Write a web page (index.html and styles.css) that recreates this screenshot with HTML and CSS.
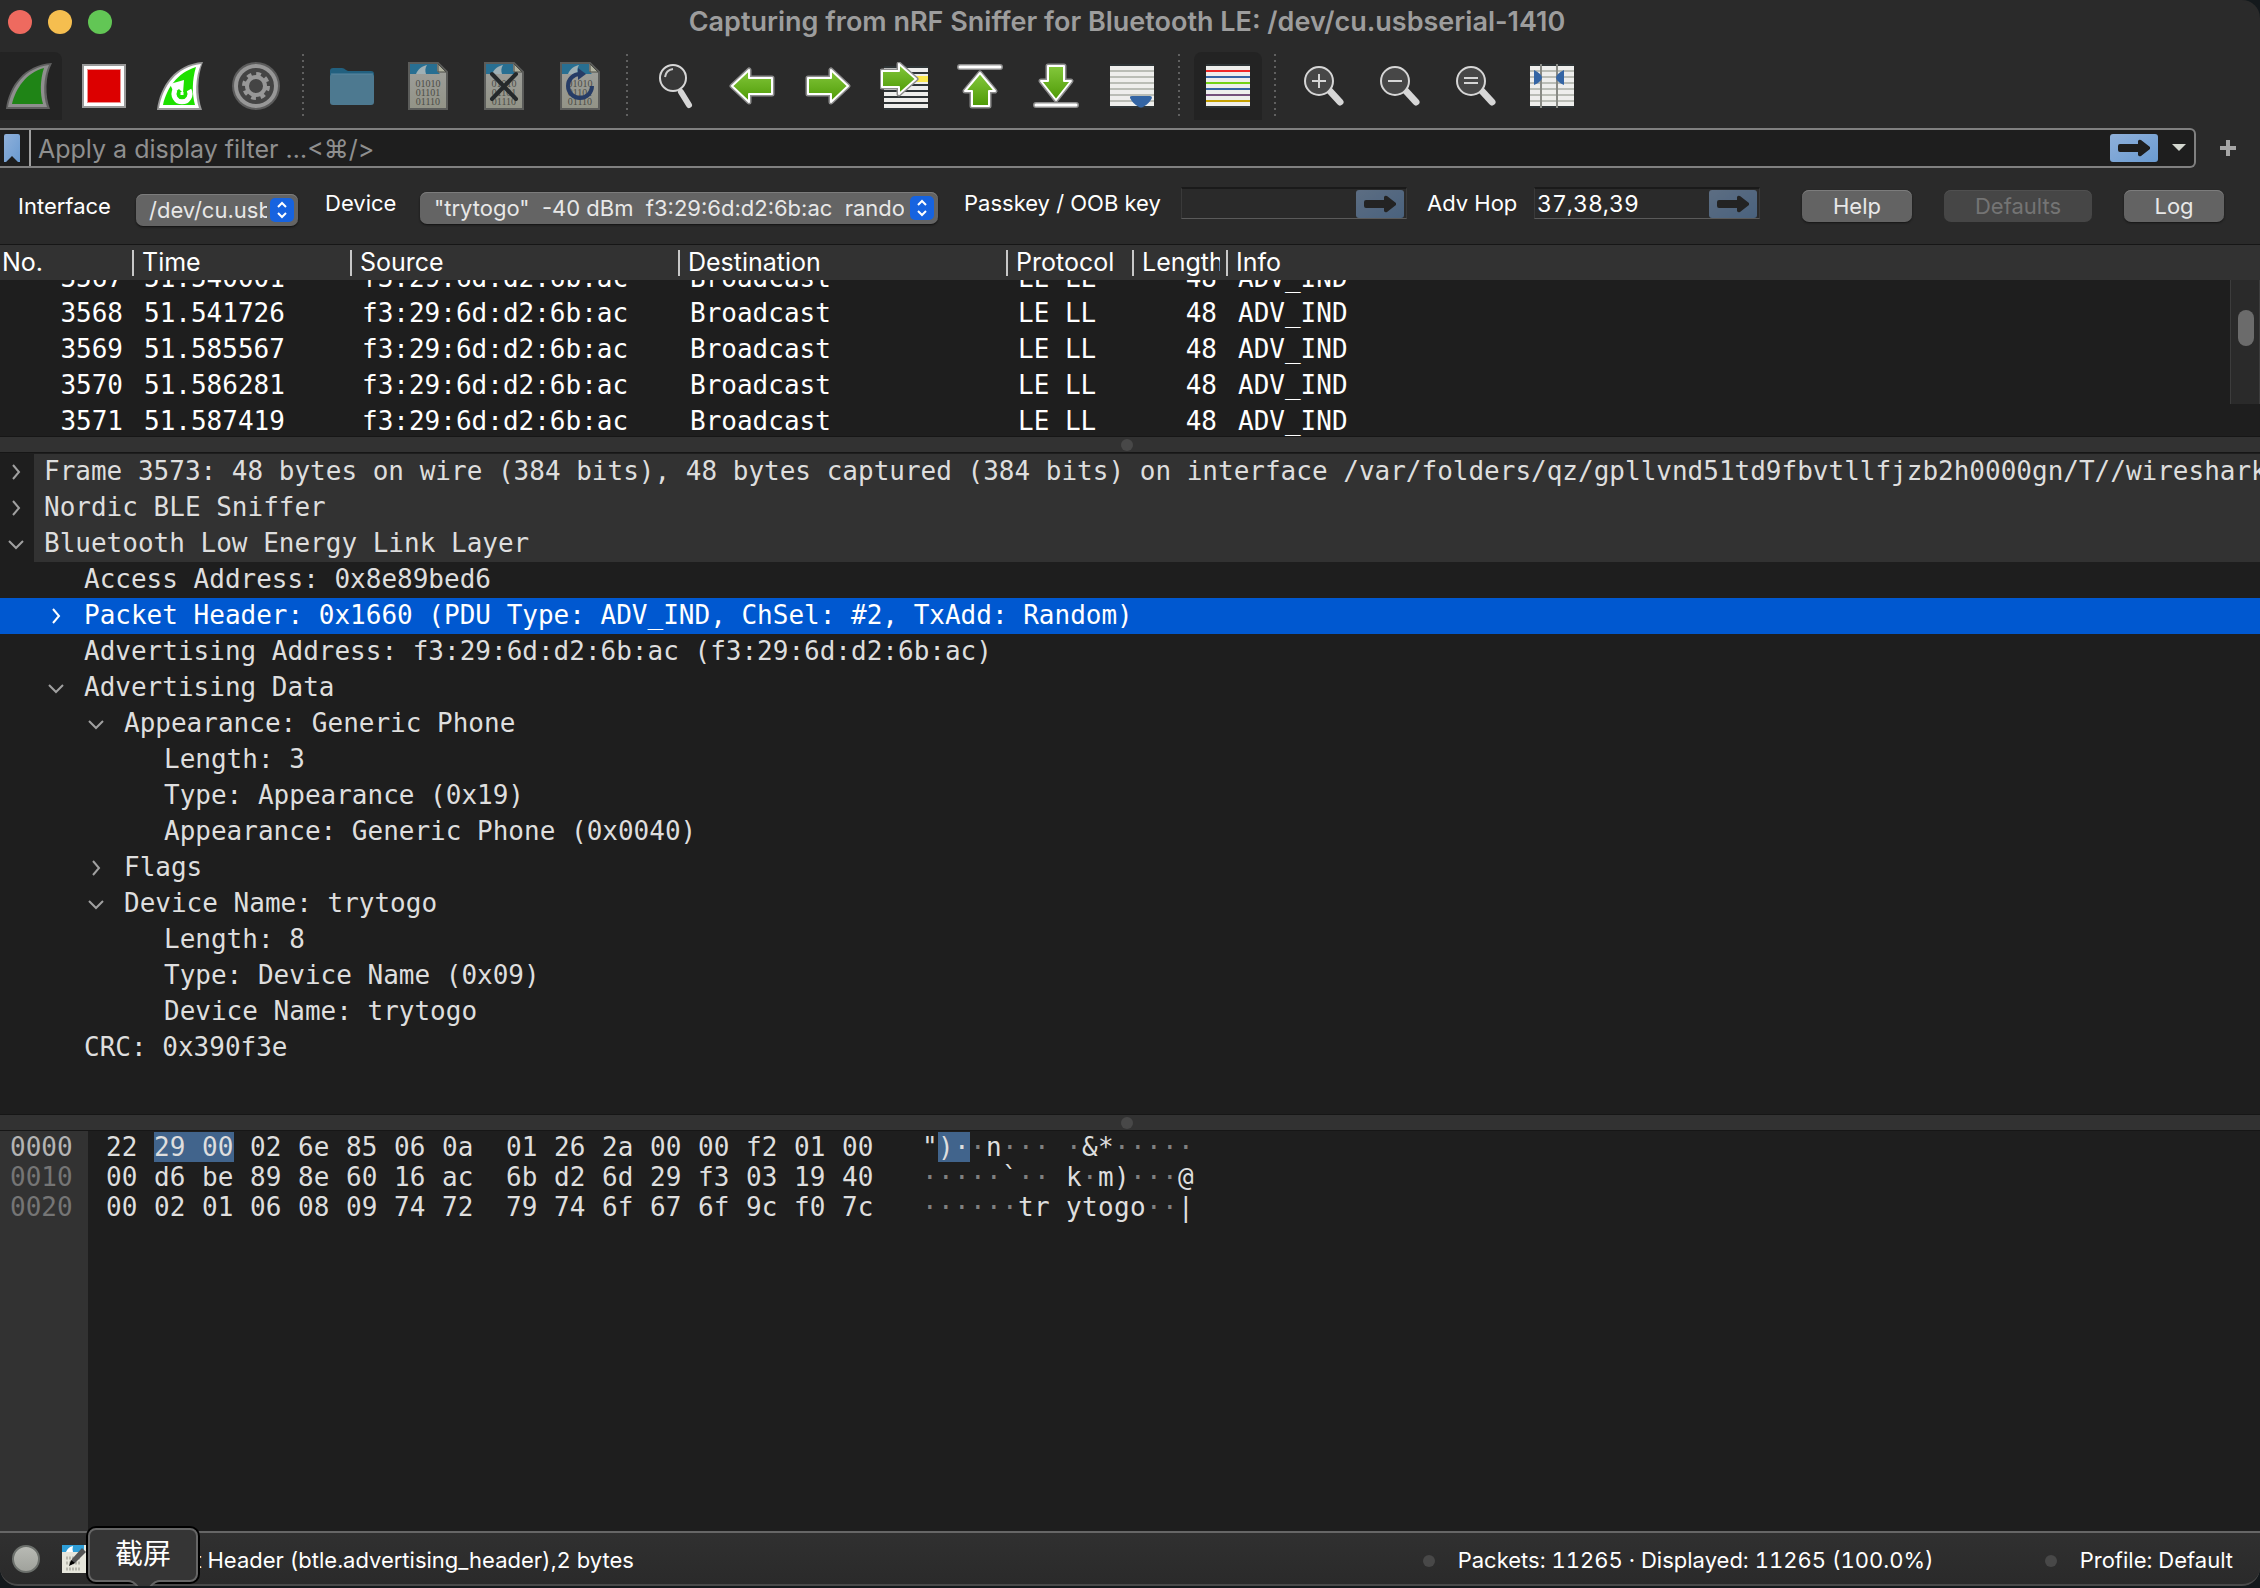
FILE: index.html
```html
<!DOCTYPE html>
<html lang="en">
<head>
<meta charset="utf-8">
<title>Capturing from nRF Sniffer for Bluetooth LE: /dev/cu.usbserial-1410</title>
<link rel="stylesheet" href="styles.css">
</head>
<body>
<svg class="defs" aria-hidden="true">
  <defs>
    <linearGradient id="gGreen" x1="0" y1="0" x2="0" y2="1"><stop offset="0" stop-color="#84c83c"/><stop offset="1" stop-color="#4e9a06"/></linearGradient>
    <linearGradient id="gBlue" x1="0" y1="0" x2="1" y2="1"><stop offset="0" stop-color="#8fb0da"/><stop offset="1" stop-color="#6a9bd1"/></linearGradient>
    <linearGradient id="gPaper" x1="0" y1="0" x2="0" y2="1"><stop offset="0" stop-color="#9fa09d"/><stop offset="1" stop-color="#929386"/></linearGradient>
    <symbol id="doc" viewBox="0 0 48 48">
      <path d="M5 1H34L43 10V47H5Z" fill="url(#gPaper)" stroke="#5b5c5a" stroke-width="2"/>
      <path d="M6 2H33V9L36 12H6Z" fill="#286f92"/>
      <path d="M12 12C14 7 18 4 23 3C21 6 21 9 22 12Z" fill="#9fb0b5"/>
      <path d="M34 2V10H42Z" fill="#b0b19f" stroke="#4b4c46" stroke-width="1"/>
      <g font-family="Liberation Serif, serif" font-size="10" fill="#4c4d47" text-anchor="middle"><text x="24" y="25">01010</text><text x="24" y="34">01101</text><text x="24" y="43">01110</text></g>
    </symbol>
    <symbol id="sheet" viewBox="0 0 48 48">
      <path d="M2 2H46V46H2Z" fill="#2e3436"/><path d="M2 4H46V44H2Z" fill="#eeeeec"/>
      <path d="M2 9H46M2 15H46M2 21H46M2 27H46M2 33H46M2 39H46" stroke="#babdb6" stroke-width="2"/>
    </symbol>
    <symbol id="lens" viewBox="0 0 48 48">
      <path d="M29 28L40 40" stroke="#d6d6d6" stroke-width="7" stroke-linecap="round"/>
      <circle cx="19" cy="19" r="14" fill="#474747" stroke="#d6d6d6" stroke-width="2"/>
    </symbol>
    <symbol id="go" viewBox="0 0 48 28">
      <rect width="48" height="28" rx="3" fill="url(#gBlue)"/>
      <path d="M10 10H28V7Q29 5 31 6L40 13V15L31 22Q29 23 28 21V18H10Q8 18 8 16V12Q8 10 10 10Z" fill="#1e1e1e"/>
    </symbol>
    <symbol id="right" viewBox="0 0 16 16"><path d="M5 1L11 8L5 15" fill="none" stroke="currentColor" stroke-width="2"/></symbol>
    <symbol id="down" viewBox="0 0 16 16"><path d="M1 5L8 12L15 5" fill="none" stroke="currentColor" stroke-width="2"/></symbol>
  </defs>
</svg>

<div class="window">
  <header class="titlebar">
    <div class="lights"><i class="red"></i><i class="yellow"></i><i class="green"></i></div>
    <h1>Capturing from nRF Sniffer for Bluetooth LE: /dev/cu.usbserial-1410</h1>
  </header>

  <nav class="toolbar">
    <button class="on" aria-label="Start capture"><svg viewBox="0 0 48 48"><path d="M2 47C5 24 20 3 48 1C41 14 41 34 46 47Z" fill="#606060"/><path d="M4 45C8 24 21 6 45 3C39 16 39 34 43 45Z" fill="#8f8f8f"/><path d="M8 42C12 26 22 11 40 6C36 18 36 32 39 42Z" fill="#1f8416"/></svg></button>
    <button aria-label="Stop capture"><svg viewBox="0 0 48 48"><path d="M2 2H46V46H2Z" fill="#999"/><path d="M4 4H44V44H4Z" fill="#fff"/><path d="M7 7H41V41H7Z" fill="#ef9090"/><path d="M8 8H40V40H8Z" fill="#dc0000"/></svg></button>
    <button aria-label="Restart capture"><svg viewBox="0 0 48 48"><path d="M1 48C4 24 19 2 47 0C41 14 41 34 46 48Z" fill="#999"/><path d="M3 46C7 24 20 5 45 2C39 16 39 34 43 46Z" fill="#fff"/><path d="M7 43C11 26 21 11 40 5C36 18 36 32 39 43Z" fill="#1ee000"/><path d="M19 28A8 8 0 1 0 33 28" fill="none" stroke="#fff" stroke-width="5"/><path d="M14 22L28 18L27 31L23 27L18 31Z" fill="#fff"/><path d="M26 30V33" stroke="#fff" stroke-width="3"/></svg></button>
    <button aria-label="Capture options"><svg viewBox="0 0 48 48"><circle cx="24" cy="24" r="24" fill="#5c5c5c"/><circle cx="24" cy="24" r="22" fill="#979797"/><circle cx="24" cy="24" r="18" fill="#444"/><circle cx="24" cy="24" r="12" fill="none" stroke="#979797" stroke-width="4" stroke-dasharray="4.7 4.7"/><circle cx="24" cy="24" r="9" fill="none" stroke="#979797" stroke-width="4"/></svg></button>
    <span class="sep"></span>
    <button aria-label="Open file"><svg viewBox="0 0 48 48"><path d="M2 9Q2 6 5 6H14Q16 6 18 8L20 9H43Q46 9 46 12V20H2Z" fill="#22607f"/><rect x="2" y="12" width="44" height="31" rx="3" fill="#4d7990"/><path d="M3 12H45" stroke="#5a87a0"/></svg></button>
    <button aria-label="Save file"><svg><use href="#doc"/></svg></button>
    <button aria-label="Close file"><svg viewBox="0 0 48 48"><use href="#doc"/><path d="M12 12L36 37M36 12L12 37" stroke="#25292b" stroke-width="4" stroke-linecap="round"/></svg></button>
    <button aria-label="Reload file"><svg viewBox="0 0 48 48"><use href="#doc"/><path d="M36 24A12 12 0 1 1 24 12" fill="none" stroke="#263c66" stroke-width="4"/><path d="M22 6L30 12L22 18Z" fill="#263c66"/></svg></button>
    <span class="sep"></span>
    <button aria-label="Find packet"><svg viewBox="0 0 48 48"><path d="M29 30L37 43" stroke="#d6d6d6" stroke-width="6" stroke-linecap="round"/><circle cx="21" cy="16" r="13" fill="#383838" stroke="#d6d6d6" stroke-width="2"/><path d="M13 15Q14 8 21 7" fill="none" stroke="#ccc" stroke-width="2"/></svg></button>
    <button aria-label="Previous packet"><svg viewBox="0 0 48 48"><path d="M4 24L21 8V16H44V32H21V40Z" fill="url(#gGreen)" stroke="#8c8c8c" stroke-width="5" stroke-linejoin="round"/><path d="M4 24L21 8V16H44V32H21V40Z" fill="url(#gGreen)" stroke="#fff" stroke-width="2" stroke-linejoin="round"/></svg></button>
    <button aria-label="Next packet"><svg viewBox="0 0 48 48"><path d="M44 24L27 8V16H4V32H27V40Z" fill="url(#gGreen)" stroke="#8c8c8c" stroke-width="5" stroke-linejoin="round"/><path d="M44 24L27 8V16H4V32H27V40Z" fill="url(#gGreen)" stroke="#fff" stroke-width="2" stroke-linejoin="round"/></svg></button>
    <button aria-label="Go to packet"><svg viewBox="0 0 48 48"><path d="M4 4H48V48H4Z" fill="#2e3436"/><path d="M4 8H48M4 14H48M4 20H48M4 26H48M4 32H48M4 38H48M4 44H48" stroke="#eeeeec" stroke-width="4"/><path d="M34 14H48V20H34Z" fill="#fce94f"/><path d="M36 17L19 2V9H2V25H19V32Z" fill="url(#gGreen)" stroke="#8c8c8c" stroke-width="5" stroke-linejoin="round"/><path d="M36 17L19 2V9H2V25H19V32Z" fill="url(#gGreen)" stroke="#fff" stroke-width="2" stroke-linejoin="round"/></svg></button>
    <button aria-label="First packet"><svg viewBox="0 0 48 48"><path d="M4 5H44" stroke="#8c8c8c" stroke-width="6" stroke-linecap="round"/><path d="M4 5H44" stroke="#fff" stroke-width="3" stroke-linecap="round"/><path d="M24 11L39 29H33V44H16V29H9Z" fill="url(#gGreen)" stroke="#8c8c8c" stroke-width="5" stroke-linejoin="round"/><path d="M24 11L39 29H33V44H16V29H9Z" fill="url(#gGreen)" stroke="#fff" stroke-width="2" stroke-linejoin="round"/></svg></button>
    <button aria-label="Last packet"><svg viewBox="0 0 48 48"><path d="M4 43H44" stroke="#8c8c8c" stroke-width="6" stroke-linecap="round"/><path d="M4 43H44" stroke="#fff" stroke-width="3" stroke-linecap="round"/><path d="M24 38L39 19H32V4H16V19H9Z" fill="url(#gGreen)" stroke="#8c8c8c" stroke-width="5" stroke-linejoin="round"/><path d="M24 38L39 19H32V4H16V19H9Z" fill="url(#gGreen)" stroke="#fff" stroke-width="2" stroke-linejoin="round"/></svg></button>
    <button aria-label="Auto scroll"><svg viewBox="0 0 48 48"><use href="#sheet"/><path d="M22 35Q22 34 24 34H42Q44 34 44 36Q41 42 35 45Q33 46 31 45Q25 42 22 36Z" fill="#3465a4"/></svg></button>
    <span class="sep"></span>
    <button class="on" aria-label="Colorize packets"><svg viewBox="0 0 48 48"><path d="M2 2H46V46H2Z" fill="#2e3436"/><path d="M2 4H46V44H2Z" fill="#eeeeec"/><g stroke-width="2"><path d="M2 9H46" stroke="#ef2929"/><path d="M2 15H46M2 27H46" stroke="#3465a4"/><path d="M2 21H46" stroke="#73d216"/><path d="M2 33H46" stroke="#75507b"/><path d="M2 39H46" stroke="#c4a000"/></g></svg></button>
    <span class="sep"></span>
    <button aria-label="Zoom in"><svg viewBox="0 0 48 48"><use href="#lens"/><path d="M12 19H26M19 12V26" stroke="#d6d6d6" stroke-width="2"/></svg></button>
    <button aria-label="Zoom out"><svg viewBox="0 0 48 48"><use href="#lens"/><path d="M12 19H26" stroke="#d6d6d6" stroke-width="2"/></svg></button>
    <button aria-label="Normal size"><svg viewBox="0 0 48 48"><use href="#lens"/><path d="M12 16H26M12 21H26" stroke="#d6d6d6" stroke-width="2"/></svg></button>
    <button aria-label="Resize columns"><svg viewBox="0 0 48 48"><use href="#sheet"/><path d="M13 2V46M29 2V46" stroke="#888a85" stroke-width="2"/><path d="M6 8Q14 12 14 16Q13 20 6 23ZM36 8Q28 12 28 16Q29 20 36 23Z" fill="#3465a4"/></svg></button>
  </nav>

  <div class="filter-row">
    <div class="filter">
      <button class="bookmark" aria-label="Filter bookmarks"><svg viewBox="0 0 16 28"><path d="M2 0H14Q16 0 16 2V28H14L8 22L2 28H0V2Q0 0 2 0Z" fill="url(#gBlue)"/></svg></button>
      <input type="text" aria-label="Display filter" placeholder="Apply a display filter …&lt;⌘/&gt;">
      <button class="go" aria-label="Apply filter"><svg><use href="#go"/></svg></button>
      <button class="recent" aria-label="Recent filters"><svg viewBox="0 0 14 8"><path d="M0 0H14L7 7Z" fill="#d3d7cf"/></svg></button>
    </div>
    <button class="plus" aria-label="Add filter button"><svg viewBox="0 0 16 16"><path d="M8 0V16M0 8H16" stroke="#a6a6a6" stroke-width="4"/></svg></button>
  </div>

  <div class="device-bar">
    <label for="iface" class="l-iface">Interface</label>
    <div class="picker p-iface"><select id="iface"><option>/dev/cu.usbserial-1410</option></select><svg viewBox="0 0 24 24"><rect width="24" height="24" rx="5" fill="#1663e0"/><path d="M8 9L12 5L16 9M8 15L12 19L16 15" fill="none" stroke="#fff" stroke-width="2"/></svg></div>
    <label for="device" class="l-device">Device</label>
    <div class="picker p-device"><select id="device"><option>"trytogo"&nbsp; -40 dBm&nbsp; f3:29:6d:d2:6b:ac&nbsp; random</option></select><svg viewBox="0 0 24 24"><rect width="24" height="24" rx="5" fill="#1663e0"/><path d="M8 9L12 5L16 9M8 15L12 19L16 15" fill="none" stroke="#fff" stroke-width="2"/></svg></div>
    <label for="key" class="l-key">Passkey / OOB key</label>
    <div class="entry"><input id="key" type="text"><button class="go dim" aria-label="Send key"><svg><use href="#go"/></svg></button></div>
    <label for="hop" class="l-hop">Adv Hop</label>
    <div class="entry"><input id="hop" type="text" value="37,38,39"><button class="go dim" aria-label="Set hop"><svg><use href="#go"/></svg></button></div>
    <div class="actions"><button class="help">Help</button><button class="defaults" disabled>Defaults</button><button class="log">Log</button></div>
  </div>

  <section class="packets">
    <table>
      <colgroup><col class="c-no"><col class="c-time"><col class="c-addr"><col class="c-addr"><col class="c-proto"><col class="c-len"><col></colgroup>
      <thead><tr><th>No.</th><th>Time</th><th>Source</th><th>Destination</th><th>Protocol</th><th><div>Length</div></th><th>Info</th></tr></thead>
      <tbody>
        <tr class="cut"><td><div>3567</div></td><td><div>51.540001</div></td><td><div>f3:29:6d:d2:6b:ac</div></td><td><div>Broadcast</div></td><td><div>LE LL</div></td><td><div>48</div></td><td><div>ADV_IND</div></td></tr>
        <tr><td>3568</td><td>51.541726</td><td>f3:29:6d:d2:6b:ac</td><td>Broadcast</td><td>LE LL</td><td>48</td><td>ADV_IND</td></tr>
        <tr><td>3569</td><td>51.585567</td><td>f3:29:6d:d2:6b:ac</td><td>Broadcast</td><td>LE LL</td><td>48</td><td>ADV_IND</td></tr>
        <tr><td>3570</td><td>51.586281</td><td>f3:29:6d:d2:6b:ac</td><td>Broadcast</td><td>LE LL</td><td>48</td><td>ADV_IND</td></tr>
        <tr><td>3571</td><td>51.587419</td><td>f3:29:6d:d2:6b:ac</td><td>Broadcast</td><td>LE LL</td><td>48</td><td>ADV_IND</td></tr>
      </tbody>
    </table>
    <div class="scroll"><i></i></div>
  </section>

  <div class="splitter"><i></i></div>

  <section class="tree">
    <div class="node top"><svg><use href="#right"/></svg><span>Frame 3573: 48 bytes on wire (384 bits), 48 bytes captured (384 bits) on interface /var/folders/qz/gpllvnd51td9fbvtllfjzb2h0000gn/T//wireshark_extcap</span></div>
    <div class="node top"><svg><use href="#right"/></svg><span>Nordic BLE Sniffer</span></div>
    <div class="node top"><svg><use href="#down"/></svg><span>Bluetooth Low Energy Link Layer</span></div>
    <div class="node d1"><span>Access Address: 0x8e89bed6</span></div>
    <div class="node d1 selected"><svg><use href="#right"/></svg><span>Packet Header: 0x1660 (PDU Type: ADV_IND, ChSel: #2, TxAdd: Random)</span></div>
    <div class="node d1"><span>Advertising Address: f3:29:6d:d2:6b:ac (f3:29:6d:d2:6b:ac)</span></div>
    <div class="node d1"><svg><use href="#down"/></svg><span>Advertising Data</span></div>
    <div class="node d2"><svg><use href="#down"/></svg><span>Appearance: Generic Phone</span></div>
    <div class="node d3"><span>Length: 3</span></div>
    <div class="node d3"><span>Type: Appearance (0x19)</span></div>
    <div class="node d3"><span>Appearance: Generic Phone (0x0040)</span></div>
    <div class="node d2"><svg><use href="#right"/></svg><span>Flags</span></div>
    <div class="node d2"><svg><use href="#down"/></svg><span>Device Name: trytogo</span></div>
    <div class="node d3"><span>Length: 8</span></div>
    <div class="node d3"><span>Type: Device Name (0x09)</span></div>
    <div class="node d3"><span>Device Name: trytogo</span></div>
    <div class="node d1"><span>CRC: 0x390f3e</span></div>
  </section>

  <div class="splitter"><i></i></div>

  <section class="hex">
    <table>
      <tbody>
        <tr><th class="cur">0000</th><td>22</td><td class="hl">29</td><td class="hl-end"><b>00</b></td><td>02</td><td>6e</td><td>85</td><td>06</td><td class="mid">0a</td><td>01</td><td>26</td><td>2a</td><td>00</td><td>00</td><td>f2</td><td>01</td><td class="end">00</td><td class="a">"</td><td class="a hl">)</td><td class="a hl">·</td><td class="a n">·</td><td class="a">n</td><td class="a n">·</td><td class="a n">·</td><td class="a n">·</td><td class="a"></td><td class="a n">·</td><td class="a">&amp;</td><td class="a">*</td><td class="a n">·</td><td class="a n">·</td><td class="a n">·</td><td class="a n">·</td><td class="a n">·</td></tr>
        <tr><th>0010</th><td>00</td><td>d6</td><td>be</td><td>89</td><td>8e</td><td>60</td><td>16</td><td class="mid">ac</td><td>6b</td><td>d2</td><td>6d</td><td>29</td><td>f3</td><td>03</td><td>19</td><td class="end">40</td><td class="a n">·</td><td class="a n">·</td><td class="a n">·</td><td class="a n">·</td><td class="a n">·</td><td class="a">`</td><td class="a n">·</td><td class="a n">·</td><td class="a"></td><td class="a">k</td><td class="a n">·</td><td class="a">m</td><td class="a">)</td><td class="a n">·</td><td class="a n">·</td><td class="a n">·</td><td class="a">@</td></tr>
        <tr><th>0020</th><td>00</td><td>02</td><td>01</td><td>06</td><td>08</td><td>09</td><td>74</td><td class="mid">72</td><td>79</td><td>74</td><td>6f</td><td>67</td><td>6f</td><td>9c</td><td>f0</td><td class="end">7c</td><td class="a n">·</td><td class="a n">·</td><td class="a n">·</td><td class="a n">·</td><td class="a n">·</td><td class="a n">·</td><td class="a">t</td><td class="a">r</td><td class="a"></td><td class="a">y</td><td class="a">t</td><td class="a">o</td><td class="a">g</td><td class="a">o</td><td class="a n">·</td><td class="a n">·</td><td class="a">|</td></tr>
      </tbody>
    </table>
  </section>

  <footer class="status">
    <button class="led" aria-label="Expert information"></button>
    <button class="note" aria-label="Capture file comment"><svg viewBox="0 0 24 28"><path d="M0 0H24V28H0Z" fill="#e6e6dc"/><path d="M0 0H22V7H0Z" fill="#2f9fd8"/><path d="M4 7Q6 2 11 1Q10 4 11 7Z" fill="#fff"/><path d="M4 13H18M4 18H18M4 24H18" stroke="#b8b8ae" stroke-width="3" stroke-dasharray="2 1"/><path d="M8 20L10 14L20 3L24 7L13 18Z" fill="#555"/><path d="M7 21L9 15L13 18Z" fill="#000"/></svg></button>
    <p class="field">Packet Header (btle.advertising_header),2 bytes</p>
    <i class="grip"></i><p class="counts">Packets: 11265 · Displayed: 11265 (100.0%)</p>
    <i class="grip"></i><p>Profile: Default</p>
    <div class="tip">截屏<svg viewBox="0 0 32 10"><path d="M0 0C8 1 10 8 12 10H20C22 8 24 1 32 0Z" fill="#353535"/><path d="M0 1C8 1 10 8 12 10M20 10C22 8 24 1 32 1" fill="none" stroke="#666" stroke-width="2"/></svg></div>
  </footer>
</div>
</body>
</html>
```
FILE: styles.css
```css
* { box-sizing: border-box; }
html { height: 100%; background: #14191c; }
body { margin: 0; height: 100%; color: #fff; font: 22px/28px Inter, "Liberation Sans", "Noto Sans CJK SC", sans-serif; }
button, input, select { font: inherit; color: inherit; margin: 0; padding: 0; border: 0; background: none; appearance: none; outline: 0; }
svg { display: block; }
p, h1 { margin: 0; }
.defs { position: absolute; width: 0; height: 0; }

.window { display: flex; flex-direction: column; height: calc(100% - 2px); overflow: hidden; background: #2a2a2a; border-radius: 0 18px 18px 18px; }

.titlebar { display: grid; grid-template-columns: 1fr auto 1fr; align-items: center; height: 44px; flex: none; padding: 0 14px 0 8px; }
.titlebar h1 { font-size: 27px; font-weight: 600; color: #9d9d9d; white-space: nowrap; }
.lights { display: flex; gap: 16px; }
.lights i { width: 24px; height: 24px; border-radius: 50%; }
.red { background: #ee6a5f; }
.yellow { background: #f5be4f; }
.green { background: #62c655; }

.toolbar { display: flex; gap: 8px; flex: none; margin: 8px 0 8px -6px; }
.toolbar button { width: 68px; height: 68px; display: grid; place-items: center; border-radius: 8px 8px 0 0; }
.toolbar .on { background: #232323; }
.toolbar svg { width: 48px; height: 48px; }
.sep { width: 12px; margin: 2px 0 4px; background: repeating-linear-gradient(#606060 0 2px, transparent 2px 6px) 4px 0 / 2px 100% no-repeat; }

.filter-row { display: flex; align-items: center; flex: none; }
.filter { flex: 1; display: flex; align-items: center; height: 40px; background: #1e1e1e; border: 2px solid #808080; border-left: 0; border-radius: 0 6px 6px 0; }
.bookmark { margin-left: 4px; width: 16px; }
.bookmark svg { width: 16px; height: 28px; }
.filter input { flex: 1; height: 36px; margin-left: 9px; padding: 2px 0 0 7px; border-left: 2px solid #a0a0a0; font-size: 25px; }
.filter input::placeholder { color: #8f8f8f; opacity: 1; }
.go svg { width: 48px; height: 28px; }
.recent { margin: 0 8px 0 14px; }
.recent svg { width: 14px; height: 8px; }
.plus { margin: 0 24px; }
.plus svg { width: 16px; height: 16px; }

.device-bar { display: flex; align-items: center; flex: none; height: 76px; padding: 0 36px 6px 18px; white-space: nowrap; }
.l-iface { width: 118px; margin-top: 6px; }
.l-device { width: 95px; }
.l-key { width: 217px; }
.l-hop { width: 107px; }
.picker { position: relative; height: 32px; border-radius: 7px; background: #646464; box-shadow: inset 0 1px #7c7c7c, 0 1px 2px #111; }
.picker select { width: 100%; height: 32px; padding: 0 34px 0 14px; color: #e8e8e8; overflow: hidden; text-overflow: clip; }
.picker svg { position: absolute; right: 4px; top: 4px; width: 24px; height: 24px; pointer-events: none; }
.p-iface { width: 162px; margin: 14px 27px 0 0; }
.p-iface select { padding: 0 31px 0 13px; }
.p-device { width: 518px; margin: 10px 26px 0 0; }
.entry { display: flex; align-items: center; width: 226px; height: 32px; margin-right: 20px; padding-right: 2px; border: 1px solid #3a3a3a; border-top: 2px solid #1a1a1a; border-bottom-color: #5a5a5a; }
.entry input { flex: 1; min-width: 0; padding-left: 2px; font-size: 23px; font-variant-numeric: tabular-nums; }
.dim { opacity: .5; }
.actions { display: flex; gap: 32px; margin: 6px 0 0 auto; }
.actions button { height: 32px; border-radius: 7px; background: #636363; box-shadow: inset 0 1px #7c7c7c, 0 1px 2px #151515; color: #e8e8e8; }
.actions button:disabled { background: #464646; box-shadow: inset 0 1px #505050; color: #747474; }
.help { width: 110px; }
.defaults { width: 148px; }
.log { width: 100px; }

.packets { position: relative; flex: none; height: 192px; overflow: hidden; background: #1e1e1e; border-top: 1px solid #161616; }
.packets table { width: 100%; table-layout: fixed; border-collapse: collapse; }
.c-no { width: 132px; }
.c-time { width: 218px; }
.c-addr { width: 328px; }
.c-proto { width: 126px; }
.c-len { width: 94px; }
.packets th { height: 35px; padding: 0 6px 2px 10px; background: linear-gradient(#c8c8c8, #c8c8c8) left center / 2px 26px no-repeat #323232; font-size: 25px; font-weight: 400; text-align: left; white-space: nowrap; }
.packets th div { overflow: hidden; }
.packets th:first-child { background-image: none; padding-left: 2px; }
.packets td, .tree, .hex { font-family: "DejaVu Sans Mono", "Liberation Mono", monospace; font-size: 26px; }
.packets td { height: 36px; padding: 0 9px 0 12px; line-height: 36px; white-space: nowrap; }
.packets td:first-child, .packets td:nth-child(6) { text-align: right; }
.packets .cut td { height: 15px; }
.cut div { display: flex; align-items: flex-end; height: 15px; overflow: hidden; line-height: 34px; }
.cut td:first-child div, .cut td:nth-child(6) div { justify-content: flex-end; }
.scroll { position: absolute; right: 0; top: 35px; width: 30px; height: 124px; background: #2a2a2a; border-left: 1px solid #3c3c3c; border-right: 1px solid #3c3c3c; }
.scroll i { display: block; width: 16px; height: 36px; margin: 30px 0 0 7px; border-radius: 8px; background: #6b6b6b; }

.splitter { flex: none; height: 17px; display: grid; place-items: center; padding-right: 6px; background: #323232; border: solid #161616; border-width: 1px 0; }
.splitter i, .grip { width: 12px; height: 12px; border-radius: 50%; background: #484848; }

.tree { flex: none; height: 661px; overflow: hidden; padding-top: 1px; background: #1e1e1e; color: #dedede; line-height: 34px; }
.node { display: flex; height: 36px; white-space: pre; }
.node svg { flex: none; width: 16px; height: 16px; margin: 10px 0 0 8px; color: #a0a0a0; }
.node span { padding-left: 20px; }
.top { background: linear-gradient(90deg, #1e1e1e 34px, #323232 34px); }
.d1 { padding-left: 40px; }
.d2 { padding-left: 80px; }
.d3 { padding-left: 120px; }
.node span:first-child { padding-left: 44px; }
.selected { background: #0058d0; color: #fff; }
.selected svg { color: #fff; }

.hex { flex: 1; background: linear-gradient(90deg, #323232 88px, #1e1e1e 88px); color: #dedede; padding-top: 1px; }
.hex table { table-layout: auto; border-collapse: collapse; }
.hex th, .hex td { height: 30px; padding: 0; line-height: 30px; font-weight: 400; text-align: left; }
.hex th { min-width: 106px; padding-left: 10px; color: #757575; }
.hex th.cur { color: #b4b4b4; }
.hex td { min-width: 48px; }
.hex td.mid { min-width: 64px; }
.hex td.end { min-width: 80px; }
.hex td.a { min-width: 16px; max-width: 16px; }
.hex td.n { color: #808080; }
.hl, .hl-end b { background: #41648c; }
.hl-end b { display: block; width: 32px; font-weight: 400; }

.status { position: relative; flex: none; display: flex; align-items: center; height: 55px; padding-right: 27px; background: linear-gradient(#303030, #2a2a2a); border-top: 2px solid #666; border-bottom: 2px solid #4a4a4a; border-radius: 0 0 18px 18px; white-space: nowrap; font-variant-numeric: tabular-nums; }
.status p { padding-top: 3px; }
.led { width: 28px; height: 28px; margin-left: 12px; border-radius: 50%; border: 2px solid #6c706c; background: linear-gradient(#b8bab4, #a0a29c); }
.note { margin-left: 22px; }
.note svg { width: 24px; height: 28px; }
.field { flex: 1; margin-left: 45px; }
.grip { margin: 4px 23px 0 0; }
.counts { margin-right: 111px; }
.tip { position: absolute; left: 88px; top: -5px; width: 110px; height: 54px; border: 2px solid #666; border-radius: 8px; background: #353535; box-shadow: 0 0 0 2px #000; font-size: 28px; line-height: 48px; text-align: center; }
.tip svg { position: absolute; left: 38px; top: 50px; width: 32px; height: 10px; }
```
